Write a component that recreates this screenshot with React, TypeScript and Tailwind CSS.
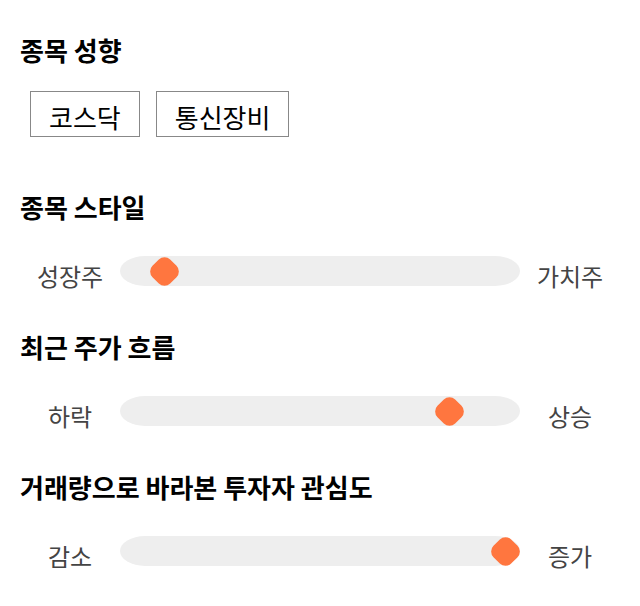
const sliders = [
  { title: "종목 스타일", left: "성장주", right: "가치주", value: 8 },
  { title: "최근 주가 흐름", left: "하락", right: "상승", value: 85 },
  { title: "거래량으로 바라본 투자자 관심도", left: "감소", right: "증가", value: 100 },
]

const TRACK = 400
const THUMB = 29

function Slider({ left, right, value }: { left: string; right: string; value: number }) {
  const center = THUMB / 2 + (value / 100) * (TRACK - THUMB)
  return (
    <div className="flex items-center h-[30px]">
      <span className="w-[100px] pt-[10px] leading-[30px] text-center text-[24px] text-[#444]">{left}</span>
      <div className="relative w-[400px] h-[30px] bg-[#eeeeee] rounded-[25px/15px]">
        <div
          className="absolute top-[2.5px] w-[25px] h-[25px] rotate-45 rounded-[8px] bg-[#ff763f]"
          style={{ left: center - 12.5 }}
        />
      </div>
      <span className="w-[100px] pt-[10px] leading-[30px] text-center text-[24px] text-[#444]">{right}</span>
    </div>
  )
}

export default function App() {
  return (
    <div className="min-h-screen px-5 pb-10 bg-white text-black font-['Noto_Sans_CJK_KR',sans-serif]">
      <h2 className="pt-[32px] text-[26px] leading-9 font-bold">종목 성향</h2>
      <div className="mt-[23px] ml-[10px] flex gap-4">
        <button className="border border-[#888] px-[18px] h-[46px] pt-[6px] text-[26px] leading-[38px]">코스닥</button>
        <button className="border border-[#888] px-[18px] h-[46px] pt-[6px] text-[26px] leading-[38px]">통신장비</button>
      </div>

      {sliders.map((s, i) => (
        <div key={s.title} className={i === 0 ? "mt-[52px]" : "mt-[43px]"}>
          <h2 className="text-[26px] leading-9 font-bold">{s.title}</h2>
          <div className="mt-[31px]">
            <Slider left={s.left} right={s.right} value={s.value} />
          </div>
        </div>
      ))}
    </div>
  )
}
